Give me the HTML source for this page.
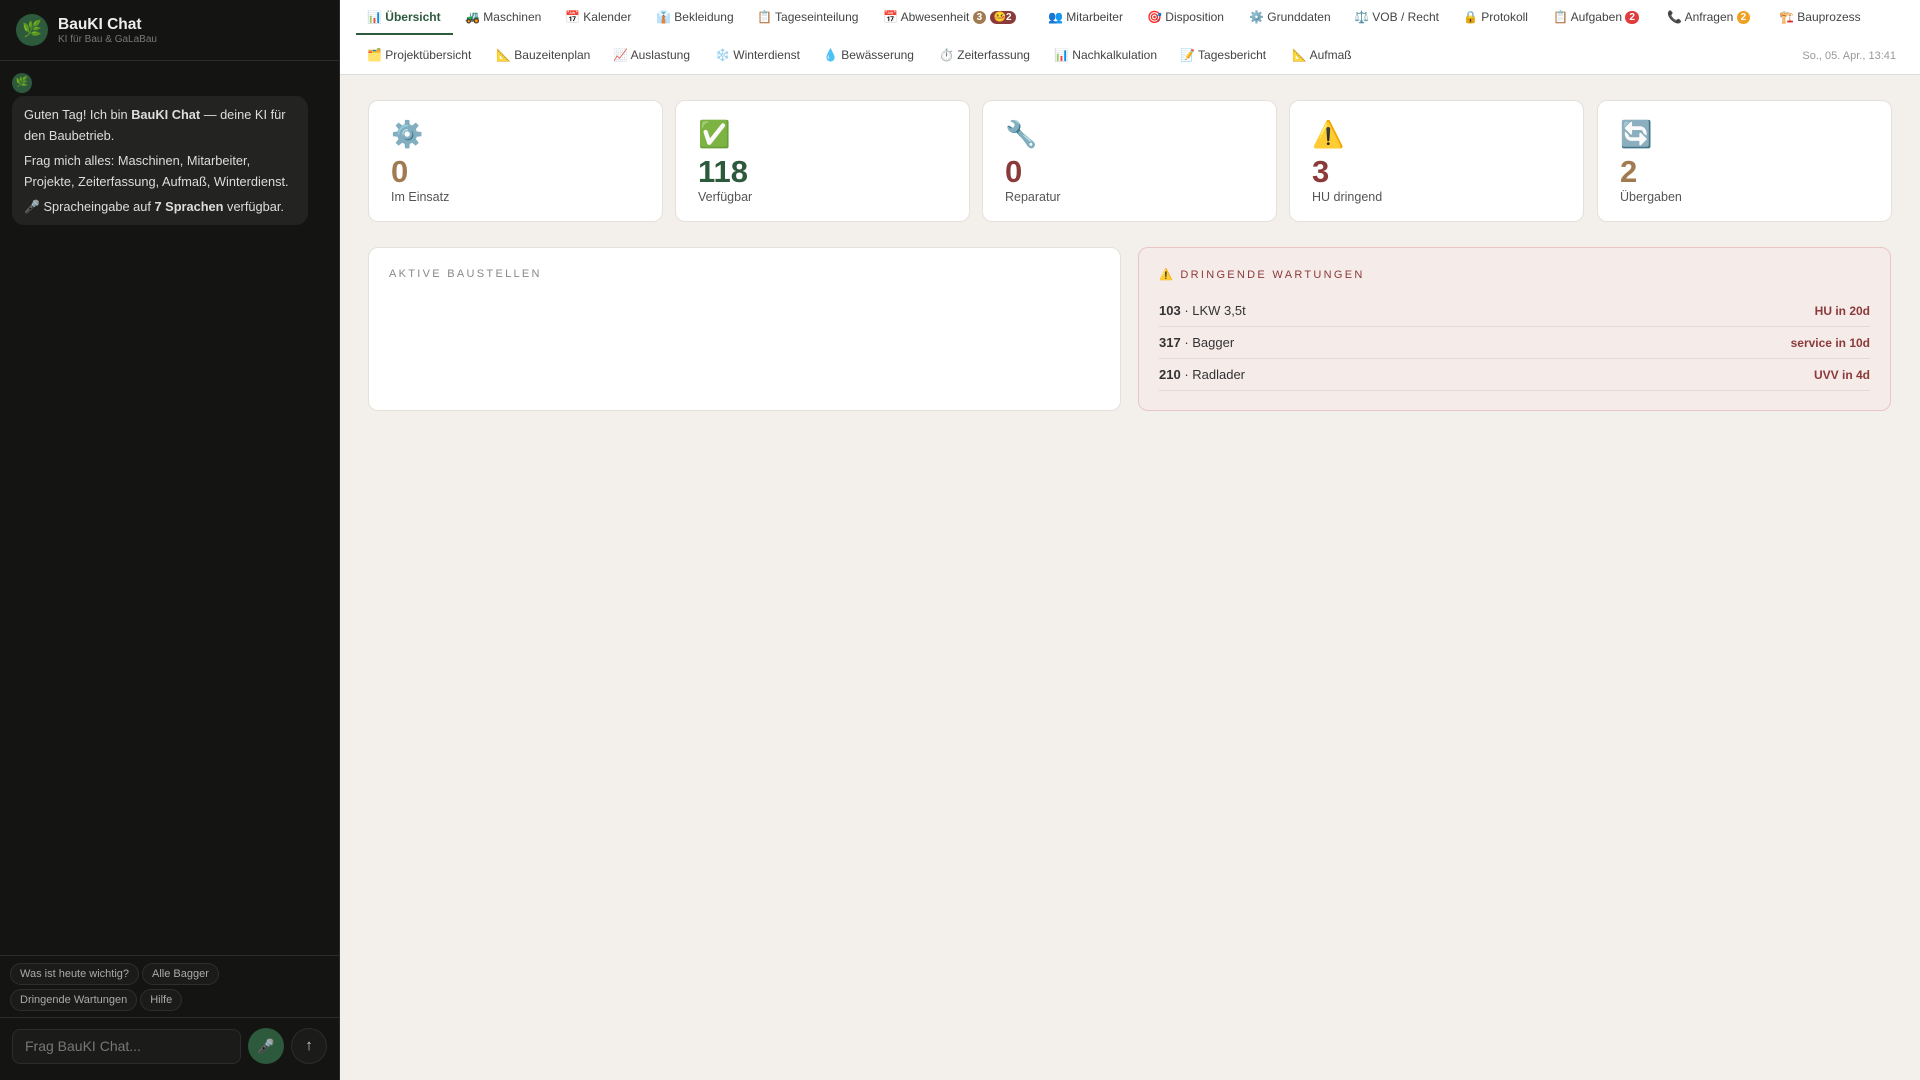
<!DOCTYPE html>
<html><head><meta charset="utf-8"><style>
*{box-sizing:border-box;margin:0;padding:0}
body{width:1920px;height:1080px;overflow:hidden;font-family:"Liberation Sans","Noto Sans CJK JP",sans-serif;background:#f3f0eb;position:relative}
.side{position:absolute;left:0;top:0;width:340px;height:1080px;background:#141412;border-right:1px solid #2a2a28}
.hdr{height:61px;border-bottom:1px solid #2c2c2a;position:relative}
.logo{position:absolute;left:16px;top:14px;width:32px;height:32px;border-radius:50%;background:#2d5a3d;color:#cfe;font-size:16px;text-align:center;line-height:32px}
.t1{position:absolute;left:58px;top:16px;color:#eee;font-weight:bold;font-size:15.5px}
.t2{position:absolute;left:58px;top:34px;color:#777;font-size:10px}
.av{position:absolute;left:12px;top:73px;width:20px;height:20px;border-radius:50%;background:#2d5a3d;font-size:10px;text-align:center;line-height:20px}
.bub{position:absolute;left:12px;top:96px;width:296px;background:#232321;border-radius:12px;padding:9px 12px 7px;color:#ddd;font-size:12.8px;line-height:20.5px}
.bub p{margin-bottom:5px}.bub p:last-child{margin-bottom:0}
.chips{position:absolute;left:0;top:955px;width:340px;border-top:1px solid #2c2c2a;border-bottom:1px solid #2c2c2a;height:63px;padding:7px 10px}
.chip{display:inline-block;height:22px;line-height:20px;padding:0 9px;border:1px solid #2e2e2c;border-radius:11px;background:#1b1b19;color:#aaa;font-size:11px;margin:0 3px 4px 0}
.inp{position:absolute;left:12px;top:1029px;width:229px;height:35px;border:1px solid #2c2c2a;border-radius:8px;background:#1b1b19;color:#777;font-size:14px;padding:0 12px;line-height:33px}
.mic{position:absolute;left:248px;top:1028px;width:36px;height:36px;border-radius:50%;background:#2d5a3d;text-align:center;line-height:36px;font-size:14px}
.snd{position:absolute;left:291px;top:1028px;width:36px;height:36px;border-radius:50%;background:#1b1b19;border:1px solid #2c2c2a;text-align:center;line-height:34px;color:#ccc;font-size:15px}
.nav{position:absolute;left:340px;top:0;width:1580px;height:75px;background:#fff;border-bottom:1px solid #ddd}
.n{position:absolute;font-size:12px;color:#444;white-space:nowrap}
.r1{top:10px}.r2{top:48px}
.act{color:#2d5a3d;font-weight:bold}
.ul{position:absolute;left:16px;top:33px;width:97px;height:2px;background:#2d5a3d}
.b{display:inline-block;font-size:10px;color:#fff;border-radius:7px;padding:0 4px;line-height:13px;font-weight:bold;vertical-align:1px}
.card{position:absolute;top:100px;width:295px;height:122px;background:#fff;border:1px solid #e4e0da;border-radius:10px;padding:18px 22px}
.ic{font-size:26px;height:36px}
.num{font-size:31px;font-weight:bold;line-height:34px}
.lb{font-size:12.5px;color:#555;margin-top:1px}
.pan{position:absolute;top:247px;height:164px;border-radius:10px;padding:20px 20px}
.pt{font-size:11px;letter-spacing:2.3px;color:#888}
.row{display:flex;justify-content:space-between;border-bottom:1px solid #e6d8d6;height:32px;align-items:center;font-size:13px;color:#333}
.row span:last-child{color:#8b3a3a;font-weight:bold;font-size:12px}
</style></head><body>
<div class="side">
<div class="hdr"><div class="logo">🌿</div><div class="t1">BauKI Chat</div><div class="t2">KI für Bau &amp; GaLaBau</div></div>
<div class="av">🌿</div>
<div class="bub"><p>Guten Tag! Ich bin <b>BauKI Chat</b> — deine KI für den Baubetrieb.</p><p>Frag mich alles: Maschinen, Mitarbeiter, Projekte, Zeiterfassung, Aufmaß, Winterdienst.</p><p>🎤 Spracheingabe auf <b>7 Sprachen</b> verfügbar.</p></div>
<div class="chips"><span class="chip">Was ist heute wichtig?</span><span class="chip">Alle Bagger</span><br><span class="chip">Dringende Wartungen</span><span class="chip">Hilfe</span></div>
<div class="inp">Frag BauKI Chat...</div><div class="mic">🎤</div><div class="snd">↑</div>
</div>
<div class="nav">
<span class="n r1 act" style="left:27px">📊 Übersicht</span><div class="ul"></div>
<span class="n r1" style="left:125px">🚜 Maschinen</span>
<span class="n r1" style="left:225px">📅 Kalender</span>
<span class="n r1" style="left:316px">👔 Bekleidung</span>
<span class="n r1" style="left:417px">📋 Tageseinteilung</span>
<span class="n r1" style="left:543px">📅 Abwesenheit <span class="b" style="background:#a07a50">3</span> <span class="b" style="background:#8b3a3a">🤒2</span></span>
<span class="n r1" style="left:708px">👥 Mitarbeiter</span>
<span class="n r1" style="left:807px">🎯 Disposition</span>
<span class="n r1" style="left:909px">⚙️ Grunddaten</span>
<span class="n r1" style="left:1014px">⚖️ VOB / Recht</span>
<span class="n r1" style="left:1123px">🔒 Protokoll</span>
<span class="n r1" style="left:1213px">📋 Aufgaben <span class="b" style="background:#e03c3c">2</span></span>
<span class="n r1" style="left:1327px">📞 Anfragen <span class="b" style="background:#f0a020">2</span></span>
<span class="n r1" style="left:1439px">🏗️ Bauprozess</span>
<span class="n r2" style="left:27px">🗂️ Projektübersicht</span>
<span class="n r2" style="left:156px">📐 Bauzeitenplan</span>
<span class="n r2" style="left:273px">📈 Auslastung</span>
<span class="n r2" style="left:375px">❄️ Winterdienst</span>
<span class="n r2" style="left:483px">💧 Bewässerung</span>
<span class="n r2" style="left:599px">⏱️ Zeiterfassung</span>
<span class="n r2" style="left:714px">📊 Nachkalkulation</span>
<span class="n r2" style="left:840px">📝 Tagesbericht</span>
<span class="n r2" style="left:952px">📐 Aufmaß</span>
<span class="n" style="right:24px;top:50px;font-size:11px;color:#999">So., 05. Apr., 13:41</span>
</div>
<div class="card" style="left:368px"><div class="ic">⚙️</div><div class="num" style="color:#a07a50">0</div><div class="lb">Im Einsatz</div></div>
<div class="card" style="left:675px"><div class="ic">✅</div><div class="num" style="color:#2d5a3d">118</div><div class="lb">Verfügbar</div></div>
<div class="card" style="left:982px"><div class="ic">🔧</div><div class="num" style="color:#8b3a3a">0</div><div class="lb">Reparatur</div></div>
<div class="card" style="left:1289px"><div class="ic">⚠️</div><div class="num" style="color:#8b3a3a">3</div><div class="lb">HU dringend</div></div>
<div class="card" style="left:1597px"><div class="ic">🔄</div><div class="num" style="color:#a07a50">2</div><div class="lb">Übergaben</div></div>
<div class="pan" style="left:368px;width:753px;background:#fff;border:1px solid #e4e0da"><div class="pt">AKTIVE BAUSTELLEN</div></div>
<div class="pan" style="left:1138px;width:753px;background:#f5ecea;border:1px solid #e8c5c3"><div class="pt" style="color:#8b3a3a">⚠️ DRINGENDE WARTUNGEN</div>
<div style="margin-top:14px">
<div class="row"><span><b>103</b> · LKW 3,5t</span><span>HU in 20d</span></div>
<div class="row"><span><b>317</b> · Bagger</span><span>service in 10d</span></div>
<div class="row"><span><b>210</b> · Radlader</span><span>UVV in 4d</span></div>
</div></div>
</body></html>
